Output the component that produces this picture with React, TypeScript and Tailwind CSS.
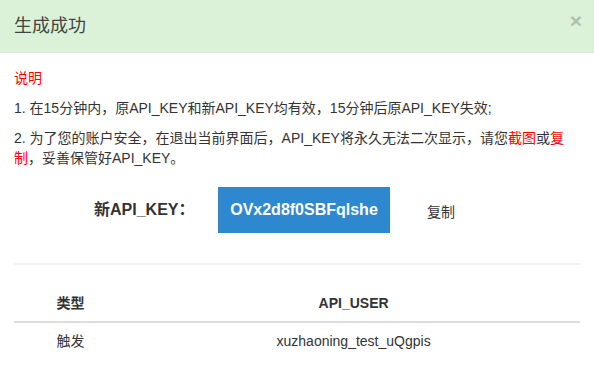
import React from "react";

export default function App() {
  const font = { fontFamily: '"Liberation Sans", "Noto Sans CJK SC", Arial, sans-serif' };
  return (
    <div className="w-[594px] h-[391px] bg-white overflow-hidden text-[14px] text-[#333]" style={font}>
      <div className="h-[53px] bg-[#dbf2d8] border-b border-[#e5e5e5] flex items-center justify-between pl-[14px] pr-[12px]">
        <div className="text-[18px] leading-[20px] text-[#444]">生成成功</div>
        <button className="text-[21px] font-bold leading-none text-black opacity-20 -mt-[12px]">×</button>
      </div>
      <div className="px-[14px] pt-[15px]">
        <p className="leading-[20px] mb-[10px] text-[#ff0000]">说明</p>
        <p className="leading-[20px] mb-[10px]">1. 在15分钟内，原API_KEY和新API_KEY均有效，15分钟后原API_KEY失效;</p>
        <p className="leading-[20px] mb-[10px]">
          2. 为了您的账户安全，在退出当前界面后，API_KEY将永久无法二次显示，请您<span className="text-[#ff0000]">截图</span>或<span className="text-[#ff0000]">复制</span>，妥善保管好API_KEY。
        </p>
        <div className="flex items-center mt-[19px]">
          <div className="ml-[80px] w-[124px] text-[16px] font-bold text-[#333]">新API_KEY：</div>
          <div className="h-[46px] w-[172px] bg-[#2e88d0] text-white font-bold text-[16px] flex items-center justify-center">OVx2d8f0SBFqlshe</div>
          <div className="ml-[37px] mt-[4px]">复制</div>
        </div>
        <div className="mt-[30px] h-[2px] bg-[#f2f2f2]" />
        <table className="w-full mt-[20px] border-collapse">
          <thead>
            <tr className="border-b-2 border-[#ddd]">
              <th className="w-[20%] py-[8px] leading-[20px] font-bold text-center">类型</th>
              <th className="py-[8px] leading-[20px] font-bold text-center">API_USER</th>
            </tr>
          </thead>
          <tbody>
            <tr>
              <td className="py-[8px] leading-[20px] text-center">触发</td>
              <td className="py-[8px] leading-[20px] text-center">xuzhaoning_test_uQgpis</td>
            </tr>
          </tbody>
        </table>
      </div>
    </div>
  );
}
